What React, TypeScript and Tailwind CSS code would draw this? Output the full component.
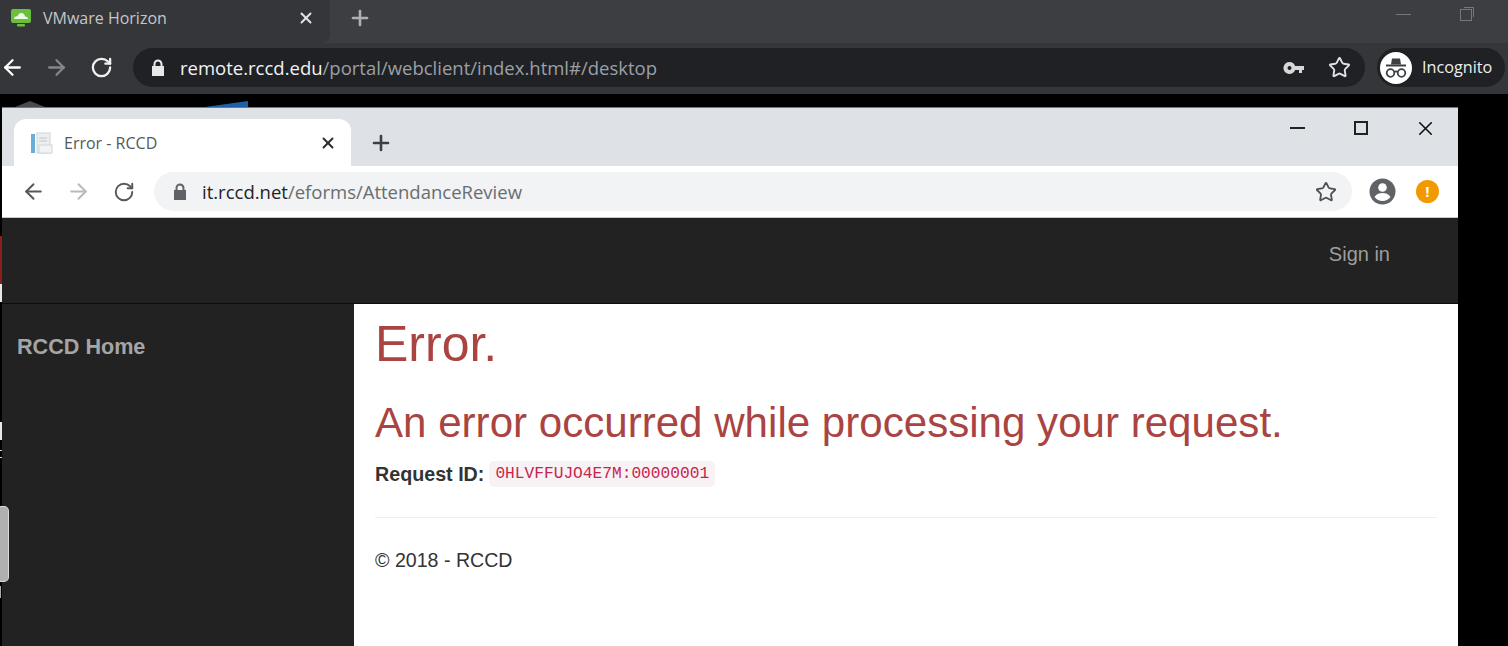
import { ArrowLeft, ArrowRight, Plus, RotateCw, Star, X } from "lucide-react";

const HorizonIcon = () => (
  <svg width="22" height="20" viewBox="0 0 22 20">
    <rect x="1" y="1" width="20" height="14" rx="2" fill="#6cbf3c" />
    <path d="M4 11c0-2 2-3 3.500-2.500C8 6 10 4.500 12 5c2 .5 3 2 3 3.500 2 0 3 1 3 2.500z" fill="#eef6e6" />
    <rect x="7" y="16" width="8" height="2.500" rx="1" fill="#6cbf3c" />
  </svg>
);

const DocIcon = () => (
  <svg width="24" height="24" viewBox="0 0 24 24">
    <rect x="1" y="3" width="4" height="19" fill="#6aaed6" />
    <rect x="7" y="2" width="13" height="20" fill="#eceef0" stroke="#d2d4d8" />
    <path d="M9 7h8M9 10h8" stroke="#c4c7cb" />
    <rect x="9" y="14" width="13" height="8" fill="#f2f3f5" stroke="#d2d4d8" />
  </svg>
);

const LockIcon = ({ color }: { color: string }) => (
  <svg width="14" height="18" viewBox="0 0 14 18" fill={color}>
    <path d="M2.500 7V5a4.500 4.500 0 0 1 9 0v2H13v10H1V7zm2 0h5V5a2.500 2.500 0 0 0-5 0z" />
  </svg>
);

const KeyIcon = () => (
  <svg width="22" height="14" viewBox="0 0 22 14" fill="#d6d7d9">
    <path d="M6.500 1a6 6 0 0 1 5.600 4H21v4h-2v3h-3V9h-3.900A6 6 0 1 1 6.500 1zm0 4a2 2 0 1 0 0 4 2 2 0 0 0 0-4z" fillRule="evenodd" />
  </svg>
);

const SpyIcon = () => (
  <svg width="26" height="26" viewBox="0 0 26 26" fill="none" stroke="#3c4043" strokeWidth="1.800">
    <path d="M8 9.500l1-6h8l1 6z" fill="#3c4043" stroke="none" />
    <path d="M3 10.500h20" strokeWidth="2" />
    <circle cx="7.500" cy="18" r="3.800" />
    <circle cx="18.500" cy="18" r="3.800" />
    <path d="M11 17c1.200-.8 2.800-.8 4 0" />
  </svg>
);

const AccountIcon = () => (
  <svg width="27" height="27" viewBox="0 0 27 27">
    <circle cx="13.500" cy="13.500" r="13" fill="#5f6368" />
    <circle cx="13.500" cy="9.500" r="4.300" fill="#fff" />
    <path d="M5.500 19c2-3.200 5-4 8-4s6 .8 8 4c-2 2.500-5 4-8 4s-6-1.500-8-4z" fill="#fff" />
  </svg>
);

const BrokenEdge = () => (
  <>
    <div className="absolute left-0 top-[236px] h-[48px] w-[2px] bg-[#8c1f1a]" />
    <div className="absolute left-0 top-[284px] h-[18px] w-[2px] bg-[#e8e8e8]" />
    <div className="absolute left-0 top-[422px] h-[18px] w-[2px] bg-[#e8e8e8]" />
    <div className="absolute left-0 top-[450px] h-[8px] w-[2px] border-y border-[#cccccc]" />
    <div className="absolute left-0 top-[506px] h-[76px] w-[9px] rounded-r-[5px] border border-l-0 border-[#d8d8d8] bg-[#b0b0b0]" />
    <div className="absolute left-0 top-[586px] h-[12px] w-[1px] bg-[#aaaaaa]" />
  </>
);

export default function App() {
  return (
    <div className="relative flex h-[646px] w-[1508px] flex-col overflow-hidden bg-black font-['Liberation_Sans',sans-serif]">
      {/* outer chrome */}
      <div className="h-[94px] shrink-0 bg-[#35363a] font-['Open_Sans',sans-serif]">
        <div className="flex h-[43px] bg-[#3d3e41]">
          <div className="flex w-[330px] items-center rounded-br-[8px] bg-[#35363a] pb-[8px] pl-[10px] pr-[15px]">
            <HorizonIcon />
            <span className="ml-[11px] flex-1 text-[16px] text-[#c4c6c9]">VMware Horizon</span>
            <X size={18} strokeWidth={2.6} className="text-[#e2e3e5]" />
          </div>
          <Plus size={24} strokeWidth={2.6} className="ml-[18px] mt-[6px] text-[#aeb0b3]" />
          <div className="ml-auto mr-[36px] flex items-center gap-[49px] pb-[14px]">
            <div className="h-px w-[15px] bg-[#77787b]" />
            <div className="relative h-[12px] w-[12px] border border-[#77787b] bg-[#3d3e41]">
              <div className="absolute -right-[3px] -top-[3px] h-[10px] w-[10px] border-r border-t border-[#77787b]" />
            </div>
          </div>
        </div>
        <div className="flex h-[51px] items-center pb-[2px]">
          <ArrowLeft size={25} strokeWidth={2.2} className="ml-0 text-white" />
          <ArrowRight size={25} strokeWidth={2.2} className="ml-[19px] text-[#85878a]" />
          <RotateCw size={23} strokeWidth={2.4} className="ml-[21px] text-[#f1f1f1]" />
          <div className="ml-[20px] flex h-[39px] w-[1232px] items-center rounded-full bg-[#202124] pl-[18px] pr-[14px]">
            <LockIcon color="#e8e8e8" />
            <span className="ml-[15px] flex-1 text-[18.500px] text-[#f1f3f4]">
              remote.rccd.edu<span className="text-[#9aa0a6]">/portal/webclient/index.html#/desktop</span>
            </span>
            <KeyIcon />
            <Star size={23} strokeWidth={2} className="ml-[23px] text-[#e0e1e3]" />
          </div>
          <div className="ml-[12px] flex h-[39px] w-[128px] items-center rounded-full bg-[#202124] pl-[3px]">
            <div className="flex h-[32px] w-[32px] items-center justify-center rounded-full bg-white">
              <SpyIcon />
            </div>
            <span className="ml-[10px] text-[16.200px] text-[#eeeeee]">Incognito</span>
          </div>
        </div>
      </div>

      {/* pieces of the desktop behind the inner window */}
      <div className="absolute left-[15px] top-[101px] h-[6px] w-[30px] bg-[#4a4a4c] [clip-path:polygon(50%_0,100%_100%,0_100%)]" />
      <div className="absolute left-[205px] top-[101px] h-[6px] w-[43px] bg-[#1f5fa8] [clip-path:polygon(100%_0,100%_100%,0_100%)]" />
      <BrokenEdge />

      {/* inner window */}
      <div className="ml-[2px] mt-[13px] flex w-[1456px] flex-1 flex-col border-t border-[#3d85c6]">
        <div className="flex h-[58px] shrink-0 bg-[#dee1e6] font-['Open_Sans',sans-serif]">
          <div className="ml-[12px] mt-[11px] flex w-[337px] items-center rounded-t-[12px] bg-white pl-[16px] pr-[14px]">
            <DocIcon />
            <span className="ml-[10px] flex-1 text-[16px] text-[#55585c]">Error - RCCD</span>
            <X size={18} strokeWidth={2.6} className="text-[#2c2d30]" />
          </div>
          <Plus size={24} strokeWidth={2.6} className="ml-[18px] mt-[23px] text-[#3c4043]" />
          <div className="ml-auto mr-[21px] flex h-[40px] items-center gap-[46px]">
            <div className="mr-[3px] h-[2px] w-[15px] bg-[#222222]" />
            <div className="h-[14px] w-[14px] border-2 border-[#222222]" />
            <X size={23} strokeWidth={1.6} className="text-[#111111]" />
          </div>
        </div>
        <div className="flex h-[52px] shrink-0 items-center border-b border-[#c8c8c8] bg-white font-['Open_Sans',sans-serif]">
          <ArrowLeft size={25} strokeWidth={1.9} className="ml-[19px] text-[#55585c]" />
          <ArrowRight size={25} strokeWidth={1.9} className="ml-[20px] text-[#b8babd]" />
          <RotateCw size={22} strokeWidth={2.1} className="ml-[22px] text-[#55585c]" />
          <div className="ml-[19px] flex h-[39px] w-[1198px] items-center rounded-full bg-[#f1f3f4] pl-[19px] pr-[15px]">
            <LockIcon color="#5f6368" />
            <span className="ml-[15px] flex-1 text-[18.500px] text-[#222428]">
              it.rccd.net<span className="text-[#696d72]">/eforms/AttendanceReview</span>
            </span>
            <Star size={22} strokeWidth={2} className="text-[#4d5055]" />
          </div>
          <div className="ml-[17px]">
            <AccountIcon />
          </div>
          <div className="ml-[20px] flex h-[23px] w-[23px] items-center justify-center rounded-full bg-[#f29900] text-[15px] font-bold leading-none text-white">
            !
          </div>
        </div>
        <div className="flex h-[86px] shrink-0 items-center justify-end border-b border-[#0c0c0c] bg-[#222222] pb-[14px] pr-[68px]">
          <a className="text-[20px] text-[#9d9d9d]">Sign in</a>
        </div>
        <div className="flex flex-1">
          <aside className="w-[352px] shrink-0 bg-[#222222] pl-[15px] pt-[27px]">
            <a className="text-[21.600px] font-bold text-[#a5a5a5]">RCCD Home</a>
          </aside>
          <main className="flex-1 bg-white px-[21px]">
            <h1 className="mt-[10px] text-[50px] leading-[60px] text-[#a94442]">Error.</h1>
            <h2 className="mt-[25px] text-[42.100px] leading-[48px] text-[#a94442]">
              An error occurred while processing your request.
            </h2>
            <p className="mt-[13px] flex items-center text-[19.700px] leading-[28px] text-[#333333]">
              <strong>Request ID:</strong>
              <code className="ml-[5px] rounded-[5px] bg-[#f9f2f4] px-[6px] py-[2px] font-['Liberation_Mono',monospace] text-[16.200px] leading-[22px] text-[#c7254e]">
                0HLVFFUJO4E7M:00000001
              </code>
            </p>
            <hr className="mt-[29px] border-[#eeeeee]" />
            <p className="mt-[28px] text-[19.600px] leading-[28px] text-[#333333]">© 2018 - RCCD</p>
          </main>
        </div>
      </div>
    </div>
  );
}
